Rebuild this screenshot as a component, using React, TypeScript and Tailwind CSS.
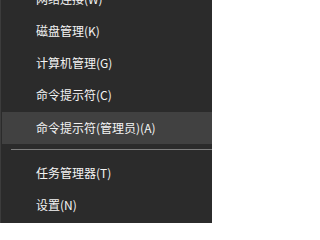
import * as React from "react";

type Item = { label: string; h: string; active?: boolean };

const topItems: Item[] = [
  { label: "网络连接(W)", h: "h-[32px]" },
  { label: "磁盘管理(K)", h: "h-[32px]" },
  { label: "计算机管理(G)", h: "h-[32px]" },
  { label: "命令提示符(C)", h: "h-[33px]" },
  { label: "命令提示符(管理员)(A)", h: "h-[32px]", active: true },
];

const bottomItems: Item[] = [
  { label: "任务管理器(T)", h: "h-[32px]" },
  { label: "设置(N)", h: "h-[32px]" },
];

function Row({ item }: { item: Item }) {
  return (
    <div
      className={`${item.h} ml-[1px] flex items-center pl-[34px] pb-[1px] ${
        item.active ? "bg-[#414141]" : ""
      }`}
    >
      <span className="text-[12px] leading-none text-[#f4f4f4] whitespace-nowrap">{item.label}</span>
    </div>
  );
}

export default function App() {
  return (
    <div
      className="w-[212px] h-[223px] overflow-hidden bg-[#2b2b2b] border-l border-[#3c3c3c]"
      style={{ fontFamily: '"Noto Sans CJK SC", "Noto Sans", sans-serif' }}
    >
      <div className="-mt-[17px] flex flex-col">
        {topItems.map((it) => (
          <Row key={it.label} item={it} />
        ))}

        <div className="pt-[5px] pb-[7px] pl-[10px]">
          <div className="h-px bg-[#7e7e7e]" />
        </div>

        {bottomItems.map((it) => (
          <Row key={it.label} item={it} />
        ))}
      </div>
    </div>
  );
}
